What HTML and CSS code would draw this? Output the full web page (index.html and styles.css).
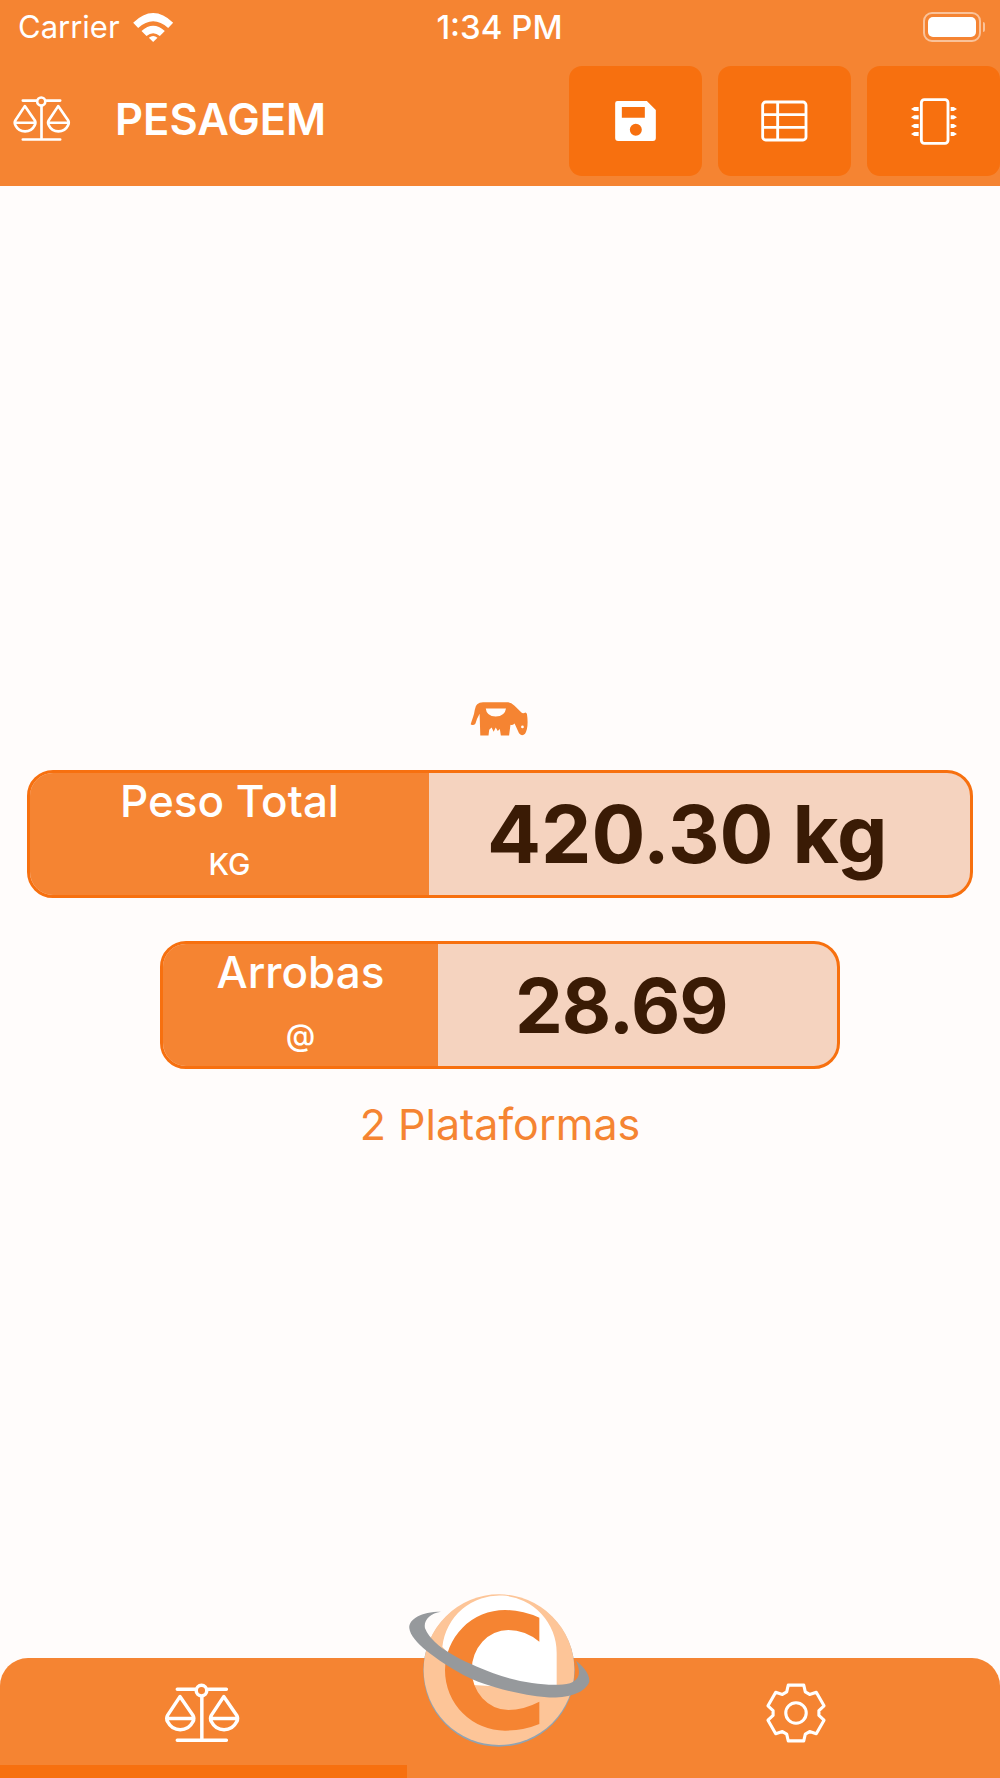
FILE: index.html
```html
<!DOCTYPE html>
<html lang="pt">
<head>
<meta charset="utf-8">
<title>Pesagem</title>
<link rel="stylesheet" href="styles.css">
</head>
<body>
<svg class="defs" width="0" height="0" aria-hidden="true">
  <symbol id="scale" viewBox="490 130 236 190">
    <g fill="none" stroke="#fff" stroke-width="10.500" stroke-linecap="round" stroke-linejoin="round">
      <path d="M532 152H585M626 152H680"/>
      <circle cx="605" cy="156" r="16"/>
      <path d="M606 174V305M532 306H680"/>
      <path d="M540 174L503 230Q497 240 503 250Q515 274 541 274Q567 274 579 250Q585 240 579 230ZM500 240H582"/>
      <path d="M672 174L635 230Q629 240 635 250Q647 274 673 274Q699 274 711 250Q717 240 711 230ZM632 240H714"/>
    </g>
  </symbol>
</svg>
<div class="app">
  <header class="topbar">
    <div class="status">
      <div class="status-left">
        <span class="carrier">Carrier</span>
        <svg class="wifi" viewBox="398 36 122 90"><path fill="#fff" d="M398 68Q458 10 518 68L503 84Q458 44 413 84ZM423 93Q458 62 493 93L478 108Q458 92 438 108ZM445 113Q458 103 471 113L458 126Z"/></svg>
      </div>
      <span class="time">1:34 PM</span>
      <div class="status-right">
        <div class="battery"><div class="battery-fill"></div></div>
        <div class="battery-cap"></div>
      </div>
    </div>
    <div class="nav">
      <svg class="nav-scale"><use href="#scale"/></svg>
      <h1 class="title">PESAGEM</h1>
      <div class="actions">
        <button class="action" type="button">
          <svg class="ic-save" viewBox="340 302 128 126"><path fill="#fff" fill-rule="evenodd" d="M350 305H438L465 332V416Q465 425 456 425H352Q343 425 343 416V312Q343 305 350 305ZM363 323V355H432V323ZM405 373A18 18 0 1 0 405 409A18 18 0 1 0 405 373Z"/></svg>
        </button>
        <button class="action" type="button">
          <svg class="ic-table" viewBox="782 302 141 126"><g fill="none" stroke="#fff" stroke-width="8.500"><rect x="787" y="308" width="130" height="114" rx="9"/><path d="M787 346H917M787 384H917M832 308V422"/></g></svg>
        </button>
        <button class="action" type="button">
          <svg class="ic-chip" viewBox="1228 294 144 141"><rect x="1262" y="299" width="80" height="131" rx="9" fill="none" stroke="#fff" stroke-width="8.500"/><g fill="#fff"><path d="M1231 327L1241 321H1254V333H1241ZM1231 352L1241 346H1254V358H1241ZM1231 378L1241 372H1254V384H1241ZM1231 402L1241 396H1254V408H1241Z"/><path d="M1369 327L1359 321H1350V333H1359ZM1369 352L1359 346H1350V358H1359ZM1369 378L1359 372H1350V384H1359ZM1369 402L1359 396H1350V408H1359Z"/></g></svg>
        </button>
      </div>
    </div>
  </header>

  <main class="content">
    <svg class="cow" viewBox="60 45 175 105"><path fill="#f58432" fill-rule="evenodd" d="M62 114C66 100 72 88 74 72Q76 50 98 50H170Q180 50 190 60L210 80Q214 84 222 80L226 84Q230 110 226 128Q222 146 212 146Q204 146 200 134L190 112Q184 118 178 116L174 147H150L147 128L141 134L135 124L129 136L123 124L116 130L114 147H90L88 84Q80 98 76 112Q70 120 62 114ZM106 68Q108 90 135 92Q162 90 165 68ZM213 118A4 4 0 1 0 213 126A4 4 0 1 0 213 118Z"/></svg>

    <section class="reading reading-total">
      <div class="reading-label">
        <span class="label-main">Peso Total</span>
        <span class="label-unit">KG</span>
      </div>
      <div class="reading-value">420.30 kg</div>
    </section>

    <section class="reading reading-arroba">
      <div class="reading-label">
        <span class="label-main">Arrobas</span>
        <span class="label-unit">@</span>
      </div>
      <div class="reading-value">28.69</div>
    </section>

    <p class="platforms">2 Plataformas</p>
  </main>

  <nav class="tabbar">
    <div class="tab tab-active">
      <svg class="tab-scale"><use href="#scale"/></svg>
    </div>
    <div class="tab tab-settings">
      <svg class="gear" viewBox="-100 -100 200 200"><g fill="none" stroke="#fff" stroke-width="10" stroke-linejoin="round"><path d="M-30 -68L-25 -90H25L30 -68L43.900 -60L65.400 -66.650L90.400 -23.350L73.900 -8V8L90.400 23.350L65.400 66.650L43.900 60L30 68L25 90H-25L-30 68L-43.900 60L-65.400 66.650L-90.400 23.350L-73.900 8V-8L-90.400 -23.350L-65.400 -66.650L-43.900 -60Z"/><circle r="33"/></g></svg>
    </div>
  </nav>

  <svg class="logo" viewBox="0 0 720 624">
    <circle cx="357" cy="303" r="227" fill="#8fa3b3"/>
    <circle cx="357" cy="299" r="226" fill="#fdc598"/>
    <path fill="#fff" d="M187 230A172 172 0 0 1 530 250V355H450L280 345L205 250Z"/>
    <path fill="#f58432" d="M478 143Q425 120 375 120A180 181 0 0 0 375 482Q430 482 478 462V395Q430 420 385 420A110 120 0 0 1 385 180Q435 180 478 215Z"/>
    <path fill="#96999c" d="M183 125C120 125 85 150 88 175C92 215 170 270 250 315C300 342 400 372 500 382C560 386 615 370 628 335C630 310 605 285 588 272C600 300 605 325 570 340C520 352 420 340 340 310C250 275 160 235 135 175C130 150 150 130 183 125Z"/>
  </svg>
</div>
</body>
</html>
```

FILE: styles.css
```css
* { box-sizing: border-box; }
html, body { margin: 0; padding: 0; }
body { font-family: Inter, "Liberation Sans", sans-serif; background: #fffcfb; }
.defs { position: absolute; }

.app {
  position: relative;
  width: 1000px;
  height: 1778px;
  display: flex;
  flex-direction: column;
  background: #fffcfb;
  overflow: hidden;
}

.topbar { height: 186px; background: #f58432; color: #fff; flex: none; }

.status {
  height: 66px;
  display: grid;
  grid-template-columns: 1fr auto 1fr;
  align-items: center;
  padding: 0 15px 12px 18px;
}
.status-left { display: flex; align-items: center; gap: 13px; }
.carrier { font-size: 31px; line-height: 34px; }
.wifi { width: 41px; height: 30px; }
.time { font-size: 33px; line-height: 34px; font-weight: 500; margin-right: 4px; }
.status-right { display: flex; align-items: center; justify-content: flex-end; gap: 2px; }
.battery {
  width: 58px;
  height: 30px;
  border: 2px solid rgba(255, 255, 255, .5);
  border-radius: 9px;
  padding: 3px;
}
.battery-fill { height: 100%; background: #fff; border-radius: 5px; }
.battery-cap { width: 2px; height: 10px; background: rgba(255, 255, 255, .5); border-radius: 0 2px 2px 0; }

.nav { height: 120px; display: flex; align-items: flex-start; }
.nav-scale { width: 60px; height: 48px; margin: 29px 0 0 12px; flex: none; }
.title {
  margin: 0 0 0 43px;
  font-size: 43.500px;
  line-height: 48px;
  padding-top: 29px;
  font-weight: 600;
}
.actions { margin-left: auto; display: flex; gap: 16px; }
.action {
  width: 133px;
  height: 110px;
  background: #f7700f;
  border: 0;
  border-radius: 13px;
  padding: 0;
  display: flex;
  align-items: center;
  justify-content: center;
}
.ic-save { width: 43px; height: 42px; }
.ic-table { width: 47px; height: 42px; }
.ic-chip { width: 48px; height: 47px; }

.content {
  flex: 1;
  display: flex;
  flex-direction: column;
  align-items: center;
  padding-top: 514px;
}
.cow { width: 60px; height: 37px; margin-bottom: 33px; }

.reading {
  display: flex;
  height: 128px;
  border: 3px solid #f7700f;
  border-radius: 26px;
  overflow: hidden;
  background: #f5d3bf;
}
.reading-total { width: 946px; margin-bottom: 43px; }
.reading-arroba { width: 680px; margin-bottom: 30px; }
.reading-total .reading-label { width: 399px; }
.reading-arroba .reading-label { width: 275px; }
.reading-label {
  background: #f58432;
  color: #fff;
  display: flex;
  flex-direction: column;
  align-items: center;
  flex: none;
}
.label-main { font-size: 44px; line-height: 50px; font-weight: 500; margin-top: 3px; }
.label-unit { font-size: 30px; line-height: 32px; font-weight: 500; margin-top: 22px; }

.reading-value { color: #3a1b05; font-weight: 700; line-height: 122px; }
.reading-total .reading-value { font-size: 80px; padding-left: 58px; }
.reading-arroba .reading-value { font-size: 76px; letter-spacing: -1px; padding-left: 77px; }

.platforms {
  margin: 0;
  color: #f58432;
  font-size: 43px;
  line-height: 50px;
}

.tabbar {
  height: 120px;
  flex: none;
  background: #f58432;
  border-radius: 28px 28px 0 0;
  display: flex;
}
.tab { display: flex; justify-content: center; padding-top: 24px; }
.tab-active { width: 407px; border-bottom: 13px solid #f7700f; padding-right: 3px; }
.tab-settings { flex: 1; padding-left: 185px; }
.tab-scale { width: 79px; height: 63px; }
.gear { width: 62px; height: 62px; }

.logo {
  position: absolute;
  left: 380px;
  top: 1570px;
  width: 240px;
  height: 208px;
}
```
